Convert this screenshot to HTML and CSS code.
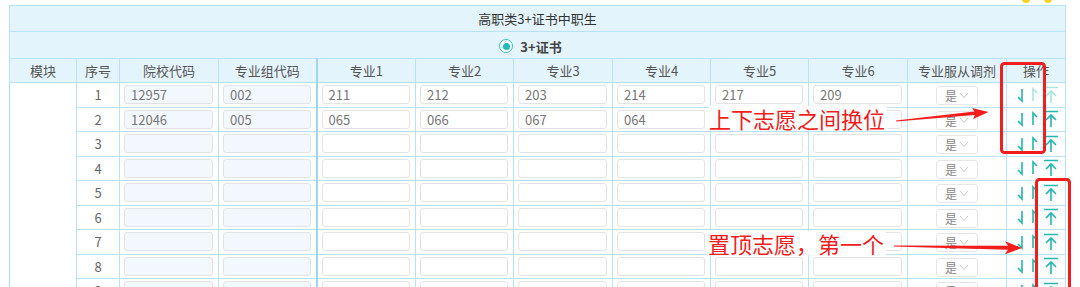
FILE: index.html
```html
<!DOCTYPE html>
<html lang="zh-CN">
<head>
  <meta charset="UTF-8">
  <title>志愿填报</title>
  <link rel="stylesheet" href="styles.css">
</head>
<body>
  <div class="page">
    <span class="dot dot-a"></span>
    <span class="dot dot-b"></span>

    <table class="plan">
      <colgroup>
        <col style="width:67px"><col style="width:43px"><col style="width:99px"><col style="width:98px">
        <col style="width:99px"><col style="width:98px"><col style="width:99px"><col style="width:98px">
        <col style="width:98px"><col style="width:99px"><col style="width:99px"><col style="width:59px">
      </colgroup>
      <tr class="title"><th colspan="12">高职类3+证书中职生</th></tr>
      <tr class="type">
        <th colspan="12"><label class="radio"><span class="radio-mark"></span>3+证书</label></th>
      </tr>
      <tr class="head">
        <th>模块</th><th>序号</th><th>院校代码</th><th>专业组代码</th>
        <th class="major-start">专业1</th><th>专业2</th><th>专业3</th><th>专业4</th><th>专业5</th><th>专业6</th>
        <th>专业服从调剂</th><th>操作</th>
      </tr>
    </table>

    <div class="annot">
      <svg class="marks" width="1080" height="287" viewBox="0 0 1080 287">
        <rect x="1001.5" y="63.5" width="43" height="89" rx="3" fill="none" stroke="#f21d1d" stroke-width="3"/>
        <rect x="1036.5" y="179.5" width="33" height="140" rx="3" fill="none" stroke="#f21d1d" stroke-width="3"/>
        <g transform="translate(896 121) rotate(-5.6)">
          <polygon points="0,-0.6 79,-1.8 77,-5.5 93,0 77,5.5 79,1.8 0,0.6" fill="#f21d1d"/>
        </g>
        <g transform="translate(894 246) rotate(0.9)">
          <polygon points="0,-0.6 114,-2 111,-6.5 128,0 111,6.5 114,2 0,0.6" fill="#f21d1d"/>
        </g>
      </svg>
      <span class="note note-swap">上下志愿之间换位</span>
      <span class="note note-top">置顶志愿，第一个</span>
    </div>
  </div>

  <script>
    var rows = [
      { school: '12957', group: '002', majors: ['211', '212', '203', '214', '217', '209'] },
      { school: '12046', group: '005', majors: ['065', '066', '067', '064', '', ''] }
    ];
    var table = document.querySelector('.plan');
    var iconDown = '<svg class="op" width="10" height="18" viewBox="0 0 10 18"><path d="M6 3V15L2 11"/></svg>';
    var iconUp = '<svg class="op" width="10" height="18" viewBox="0 0 10 18"><path d="M4 15V3L8 7"/></svg>';
    var iconTop = '<svg class="op op-top" width="16" height="18" viewBox="0 0 16 18"><path d="M1 1.5H15M8 5V17M3 10L8 5L13 10"/></svg>';

    for (var i = 0; i < 9; i++) {
      var data = rows[i] || { school: '', group: '', majors: ['', '', '', '', '', ''] };
      var tr = document.createElement('tr');
      tr.className = 'item';
      var html = '';
      if (i === 0) html += '<td class="module" rowspan="9"></td>';
      html += '<td class="no">' + (i + 1) + '</td>';
      html += '<td class="cell"><input class="field code" value="' + data.school + '"></td>';
      html += '<td class="cell"><input class="field code" value="' + data.group + '"></td>';
      data.majors.forEach(function (m, k) {
        html += '<td class="cell' + (k === 0 ? ' major-start' : '') + '"><input class="field" value="' + m + '"></td>';
      });
      html += '<td class="adjust"><span class="pick">是<svg width="10" height="7" viewBox="0 0 10 7"><path d="M1 1L5 5.5L9 1"/></svg></span></td>';
      html += '<td class="ops' + (i === 0 ? ' first' : '') + '">' + iconDown + iconUp + iconTop + '</td>';
      tr.innerHTML = html;
      table.appendChild(tr);
    }
  </script>
</body>
</html>
```

FILE: styles.css
```css
body {
  margin: 0;
  background: #fff;
  font-family: "Noto Sans CJK SC", "Noto Sans", sans-serif;
  font-size: 13px;
}

.page {
  position: relative;
  width: 1080px;
  height: 287px;
  overflow: hidden;
}

.plan {
  margin: 5px 0 0 9px;
  width: 1056px;
  border-collapse: collapse;
  table-layout: fixed;
}

.plan th,
.plan td {
  border: 1px solid #b8e2f6;
  padding: 0;
}

.plan th {
  background: #e4f4fd;
  font-weight: normal;
}

.title th {
  height: 25px;
  color: #333;
}

.type th {
  height: 26px;
}

.head th {
  height: 23px;
  color: #555;
}

.plan .major-start {
  border-left: 2px solid #9fd6f5;
}

.radio {
  display: inline-flex;
  align-items: center;
  gap: 7px;
  margin-right: 14px;
  color: #444;
  font-weight: bold;
}

.radio-mark {
  width: 14px;
  height: 14px;
  box-sizing: border-box;
  border: 1.5px solid #2bc2c2;
  border-radius: 50%;
  display: flex;
  align-items: center;
  justify-content: center;
  background: #fff;
}

.radio-mark::after {
  content: "";
  width: 7px;
  height: 7px;
  border-radius: 50%;
  background: #1dbcbc;
}

.item {
  height: 24.5px;
}

.module {
  border-left-color: #9fe2ee !important;
}

.no {
  text-align: center;
  color: #666;
}

.cell {
  padding: 0 5px 0 4px !important;
}

.field {
  display: block;
  width: 100%;
  height: 19px;
  box-sizing: border-box;
  border: 1px solid #e3e3e3;
  border-radius: 3px;
  padding: 0 6px;
  background: #fff;
  color: #777;
  font-family: "Noto Sans CJK SC", sans-serif;
  font-size: 13px;
  outline: none;
}

.field.code {
  background: #f3f8fe;
}

.adjust {
  text-align: center;
}

.pick {
  display: inline-flex;
  align-items: center;
  justify-content: center;
  gap: 2px;
  width: 42px;
  height: 19px;
  box-sizing: border-box;
  border: 1px solid #e6e6e6;
  border-radius: 3px;
  color: #888;
  font-size: 12px;
  vertical-align: middle;
}

.pick svg path {
  fill: none;
  stroke: #c8c8c8;
  stroke-width: 1;
}

.ops {
  padding-left: 9px !important;
  white-space: nowrap;
  line-height: 0;
}

.op {
  vertical-align: middle;
  margin-right: 3px;
}

.op path {
  fill: none;
  stroke: #22b8b0;
  stroke-width: 1.6;
}

.op-top {
  margin-left: 1px;
}

.first .op:nth-child(n+2) path {
  stroke: #a9e6e2;
}

.dot {
  position: absolute;
  top: -5px;
  width: 8px;
  height: 8px;
  border-radius: 50%;
  background: #f6d21e;
}

.dot-a { left: 1022px; }
.dot-b { left: 1044px; }

.annot {
  position: absolute;
  inset: 0;
  pointer-events: none;
}

.marks {
  position: absolute;
  left: 0;
  top: 0;
}

.note {
  position: absolute;
  background: #fff;
  color: #f21d1d;
  font-size: 22px;
  line-height: 24px;
  padding-right: 2px;
}

.note-swap {
  left: 709px;
  top: 106px;
}

.note-top {
  left: 708px;
  top: 231px;
}
```
